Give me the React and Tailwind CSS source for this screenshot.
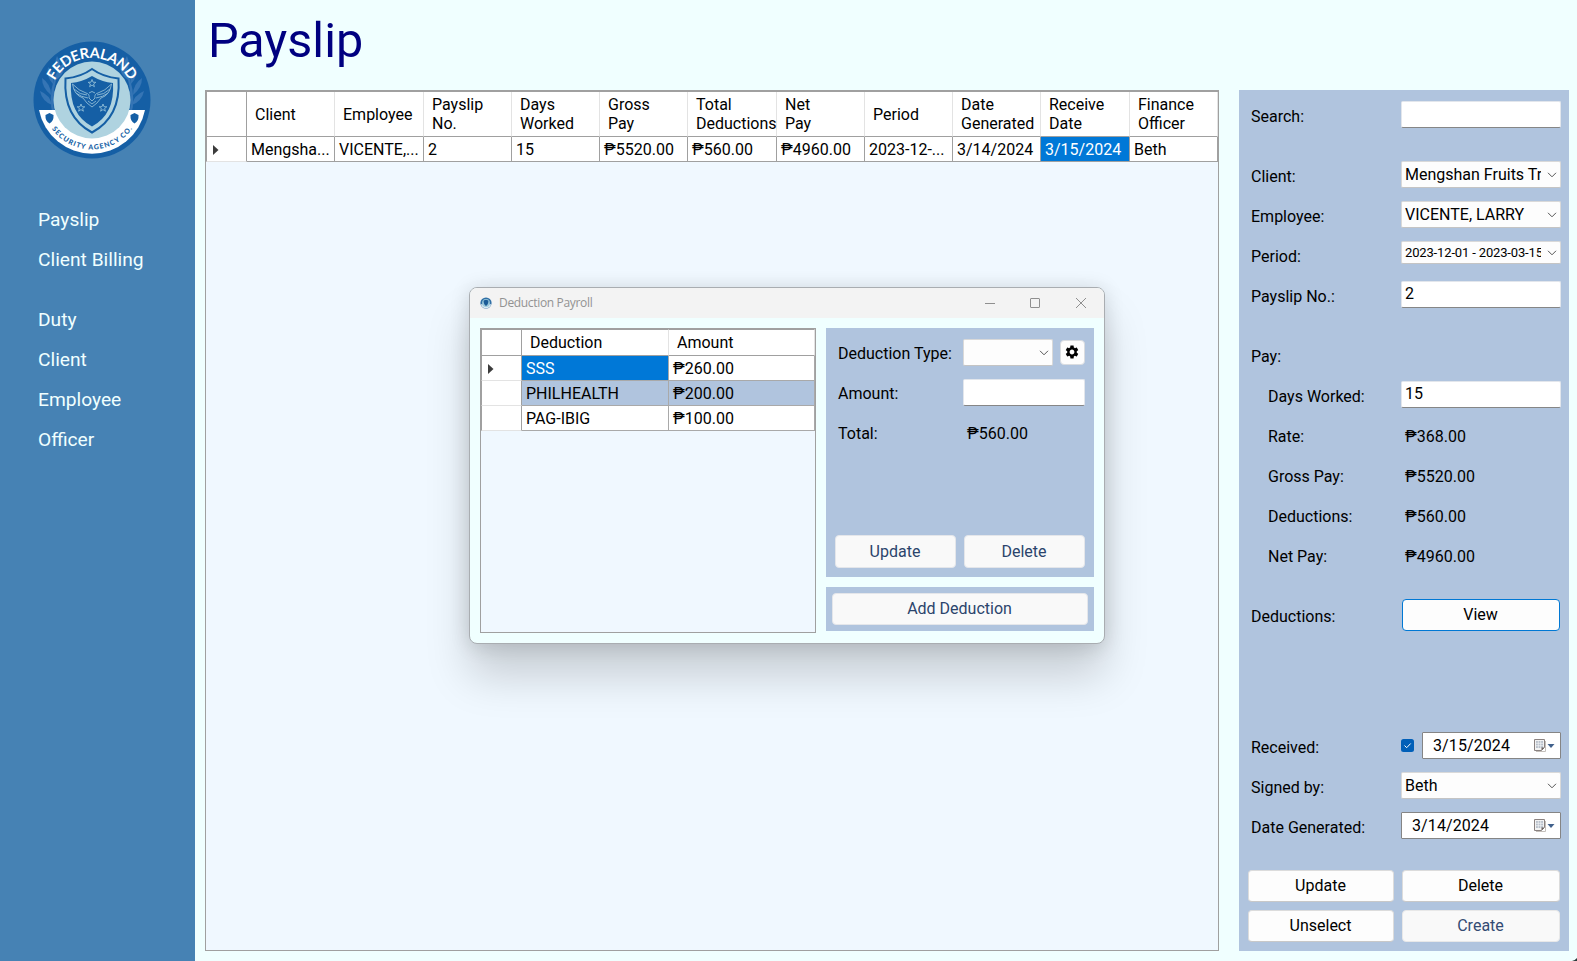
import React from "react";

const MENU = [
  { label: "Payslip", gap: "" },
  { label: "Client Billing", gap: "" },
  { label: "Duty", gap: "mt-5" },
  { label: "Client", gap: "" },
  { label: "Employee", gap: "" },
  { label: "Officer", gap: "" },
];

const COLUMNS = [
  { head: ["Client"], value: "Mengsha..." },
  { head: ["Employee"], value: "VICENTE,..." },
  { head: ["Payslip", "No."], value: "2" },
  { head: ["Days", "Worked"], value: "15" },
  { head: ["Gross", "Pay"], value: "₱5520.00" },
  { head: ["Total", "Deductions"], value: "₱560.00" },
  { head: ["Net", "Pay"], value: "₱4960.00" },
  { head: ["Period"], value: "2023-12-..." },
  { head: ["Date", "Generated"], value: "3/14/2024" },
  { head: ["Receive", "Date"], value: "3/15/2024", selected: true },
  { head: ["Finance", "Officer"], value: "Beth" },
];

const DEDUCTIONS = [
  { name: "SSS", amount: "₱260.00", nameBg: "bg-[#0078d7] text-white", amountBg: "bg-white", current: true },
  { name: "PHILHEALTH", amount: "₱200.00", nameBg: "bg-[#b0c4de]", amountBg: "bg-[#b0c4de]" },
  { name: "PAG-IBIG", amount: "₱100.00", nameBg: "bg-white", amountBg: "bg-white" },
];

const STAR = "M0 -4 L1 -1.3 L3.8 -1.2 L1.6 .5 L2.4 3.2 L0 1.6 L-2.4 3.2 L-1.6 .5 L-3.8 -1.2 L-1 -1.3 Z";

function Leaves() {
  return (
    <g fill="#3575b5">
      <path d="M20 74 Q15 58 21 38 Q26 24 38 14 L39 15 Q28 25 23 39 Q18 58 22 74 Z" />
      <path d="M19 64 Q9 60 7 50 Q17 54 19 64Z" />
      <path d="M18 54 Q9 47 9 37 Q18 43 18 54Z" />
      <path d="M20 43 Q13 36 15 26 Q22 33 20 43Z" />
      <path d="M20 64 Q26 57 23 48 Q17 55 20 64Z" />
      <path d="M25 31 Q20 24 24 15 Q29 23 25 31Z" />
      <path d="M23 39 Q31 34 31 25 Q23 30 23 39Z" />
    </g>
  );
}

function Logo() {
  return (
    <svg width="118" height="118" viewBox="0 0 118 118">
      <defs>
        <path id="arcTop" d="M17 59 A42 42 0 0 1 101 59" />
        <path id="arcBottom" d="M9.500 59 A49.500 49.500 0 0 0 108.500 59" />
      </defs>
      <circle cx="59" cy="59" r="58.500" fill="#155fa5" />
      <Leaves />
      <g transform="translate(118 0) scale(-1 1)">
        <Leaves />
      </g>
      <path d="M6 69 L112 69 A54 54 0 0 1 6 69 Z" fill="#fff" />
      <circle cx="59" cy="59" r="38.500" fill="#afd3e0" />
      <path d="M59 28 Q70 36 85.500 37.500 Q88 76 59 91.500 Q30 76 32.500 37.500 Q48 36 59 28Z" fill="#afd3e0" stroke="#155fa5" strokeWidth="2" />
      <path d="M59 35 Q69 41 80 42 Q82 73 59 85.500 Q36 73 38 42 Q49 41 59 35Z" fill="#155fa5" />
      <g fill="none" stroke="#9cc6dc" strokeWidth=".8">
        <path d={STAR} transform="translate(59 42.500)" />
        <path d={STAR} transform="translate(48 67)" />
        <path d={STAR} transform="translate(70 67)" />
      </g>
      <g fill="none" stroke="#8fbbd6" strokeWidth=".9">
        <path d="M39.500 43 Q41 54 50 57 L54 62 L59 66 L64 62 L68 57 Q77 54 78.500 43 Q72 50 65 52 Q61 53 62 57 L59 60 L56 57 Q57 53 53 52 Q46 50 39.500 43Z" />
        <path d="M41 48 Q47 54 54 54 M43 52 Q48 56 55 57 M77 48 Q71 54 64 54 M75 52 Q70 56 63 57 M56 52 Q59 49 62 52 M55 60 L59 63 L63 60" />
      </g>
      <path d="M16.500 72 L20.500 74 Q21 80 16.500 82.500 Q12 80 12.500 74Z" fill="#155fa5" />
      <path d="M101.500 72 L105.500 74 Q106 80 101.500 82.500 Q97 80 97.500 74Z" fill="#155fa5" />
      <text fill="#fff" fontFamily="Lato, sans-serif" fontWeight="700" fontSize="14.500">
        <textPath href="#arcTop" startOffset="50%" textAnchor="middle" textLength="92" lengthAdjust="spacing">FEDERALAND</textPath>
      </text>
      <text fill="#155fa5" fontFamily="Lato, sans-serif" fontWeight="900" fontSize="7">
        <textPath href="#arcBottom" startOffset="50%" textAnchor="middle" textLength="94" lengthAdjust="spacing">SECURITY AGENCY CO.</textPath>
      </text>
    </svg>
  );
}

function RowArrow() {
  return (
    <svg width="6" height="10" viewBox="0 0 6 10" className="block">
      <path d="M0 0 L5.500 5 L0 10Z" fill="#3c3c3c" />
    </svg>
  );
}

function Chevron() {
  return (
    <svg width="10" height="6" viewBox="0 0 10 6" className="shrink-0">
      <path d="M1 .8 L5 4.800 L9 .8" fill="none" stroke="#555" strokeWidth="1" />
    </svg>
  );
}

function Field({ className = "", children }) {
  return (
    <div className={`h-[27px] rounded-[2px] border border-[#e2e6ec] border-b-[#868686] bg-white pl-[3px] leading-[24px] ${className}`}>
      {children}
    </div>
  );
}

function Combo({ className = "h-[27px] w-[160px]", children }) {
  return (
    <div className={`flex items-center justify-between rounded-[2px] border border-[#d9d9d9] border-b-[#c4c4c4] bg-[#fdfdfd] pl-[3px] pr-[3px] ${className}`}>
      <span className="w-[136px] overflow-hidden whitespace-nowrap">{children}</span>
      <Chevron />
    </div>
  );
}

function DateBox({ className, children }) {
  return (
    <div className={`flex h-[27px] items-center justify-between rounded-[1px] border border-[#858585] bg-white pl-[10px] pr-[5px] ${className}`}>
      <span className="tracking-[0.1px]">{children}</span>
      <span className="flex items-center gap-px">
        <svg width="12" height="13" viewBox="0 0 12 13">
          <path d="M2 12.500 H11.500 V2" fill="none" stroke="#c4bfba" strokeWidth="1" />
          <path d="M.5 .5 H10.500 V8.500 L7.500 11.500 H.5Z" fill="#f3f3f3" stroke="#8a8280" />
          <path d="M2 2 H9 V9 H2Z" fill="#b8c0cb" />
          <path d="M2 4.300 H9 M2 6.700 H9 M4.300 2 V9 M6.700 2 V9" stroke="#f2f4f6" strokeWidth=".7" />
          <path d="M7.500 11.500 V8.500 H10.500Z" fill="#6b6361" />
        </svg>
        <svg width="8" height="4" viewBox="0 0 8 4">
          <path d="M.5 0 H7.500 L4 4Z" fill="#41618c" />
        </svg>
      </span>
    </div>
  );
}

function Button({ className = "", children }) {
  return (
    <div className={`flex items-center justify-center rounded-[4px] border pr-px ${className}`}>
      <span>{children}</span>
    </div>
  );
}

function Row({ label, indent = "pl-3", height = "h-10", children }) {
  return (
    <div className={`flex ${height}`}>
      <div className={`w-[162px] pt-[5px] leading-[22px] ${indent}`}>{label}</div>
      <div>{children}</div>
    </div>
  );
}

function Sidebar() {
  return (
    <aside className="w-[195px] shrink-0 bg-[#4682b4] text-[19.2px] text-[#f0ffff]">
      <div className="pl-[33px] pt-[41px]">
        <Logo />
      </div>
      <nav className="pl-[38px] pt-[41px]">
        {MENU.map((m) => (
          <div key={m.label} className={`flex h-10 items-center ${m.gap}`}>
            {m.label}
          </div>
        ))}
      </nav>
    </aside>
  );
}

function PayslipGrid() {
  return (
    <div className="h-[861px] w-[1014px] border border-[#a0a0a0] bg-[#f0f8ff]">
      <div className="grid h-[71px] grid-cols-[41px_88px_89px_88px_88px_88px_89px_88px_88px_88px_89px_88px] grid-rows-[45px_25px] border-t border-[#a0a0a0]">
        <div className="border-b border-l border-r border-[#a0a0a0] bg-white" />
        {COLUMNS.map((c) => (
          <div key={c.head.join()} className="flex flex-col justify-center whitespace-nowrap border-b border-r border-b-[#a0a0a0] border-r-[#e3e3e3] bg-white pl-2 leading-[19px]">
            {c.head.map((h) => (
              <span key={h}>{h}</span>
            ))}
          </div>
        ))}
        <div className="flex items-center border-b border-l border-r border-b-[#e3e3e3] border-l-[#a0a0a0] border-r-[#a0a0a0] bg-white pl-[6px] pt-[2px]">
          <RowArrow />
        </div>
        {COLUMNS.map((c) => (
          <div key={c.value} className={`whitespace-nowrap border-b border-r border-[#a0a0a0] pl-1 leading-[25px] ${c.selected ? "bg-[#0078d7] text-white" : "bg-white"}`}>
            {c.value}
          </div>
        ))}
      </div>
    </div>
  );
}

function DetailPanel() {
  const plain = "border-[#dcdcdc] border-b-[#c8c8c8] bg-[#fdfdfd]";
  return (
    <section className="flex h-[861px] w-[330px] flex-col bg-[#b0c4de] pt-[11px]">
      <Row label="Search:" height="h-[60px]"><Field className="w-[160px]" /></Row>
      <Row label="Client:"><Combo>Mengshan Fruits Trading</Combo></Row>
      <Row label="Employee:"><Combo>VICENTE, LARRY</Combo></Row>
      <Row label="Period:"><Combo className="h-[23px] w-[160px] text-[13px] tracking-[-0.15px]">2023-12-01 - 2023-03-15</Combo></Row>
      <Row label="Payslip No.:" height="h-[60px]"><Field className="w-[160px]">2</Field></Row>
      <Row label="Pay:" />
      <Row label="Days Worked:" indent="pl-[29px]"><Field className="w-[160px]">15</Field></Row>
      <Row label="Rate:" indent="pl-[29px]"><div className="pl-1 pt-[5px] leading-[22px]">₱368.00</div></Row>
      <Row label="Gross Pay:" indent="pl-[29px]"><div className="pl-1 pt-[5px] leading-[22px]">₱5520.00</div></Row>
      <Row label="Deductions:" indent="pl-[29px]"><div className="pl-1 pt-[5px] leading-[22px]">₱560.00</div></Row>
      <Row label="Net Pay:" indent="pl-[29px]" height="h-[60px]"><div className="pl-1 pt-[5px] leading-[22px]">₱4960.00</div></Row>
      <Row label="Deductions:" height="h-[131px]">
        <Button className="ml-px mt-[-2px] h-8 w-[158px] border-[#0078d4] bg-[#fdfdfd]">View</Button>
      </Row>
      <Row label="Received:">
        <div className="flex w-[160px] items-center justify-between">
          <svg width="13" height="13" viewBox="0 0 13 13">
            <rect width="13" height="13" rx="2.500" fill="#005fb8" />
            <path d="M3.500 6.500 L5.700 8.700 L9.700 4.500" fill="none" stroke="#fff" strokeWidth="1" />
          </svg>
          <DateBox className="w-[139px]">3/15/2024</DateBox>
        </div>
      </Row>
      <Row label="Signed by:"><Combo>Beth</Combo></Row>
      <Row label="Date Generated:" height="h-[58px]"><DateBox className="w-[160px]">3/14/2024</DateBox></Row>
      <div className="ml-[9px] grid grid-cols-[146px_158px] gap-2">
        <Button className={`h-8 ${plain}`}>Update</Button>
        <Button className={`h-8 ${plain}`}>Delete</Button>
        <Button className={`h-8 ${plain}`}>Unselect</Button>
        <Button className="h-8 border-[#e8e8e8] bg-[#f9f9f9] text-[#334b73]">Create</Button>
      </div>
    </section>
  );
}

function DeductionDialog() {
  const soft = "border-[#e4e6ea] bg-[#f9f9f9] text-[#2b446c]";
  return (
    <div className="absolute left-[469px] top-[287px] flex h-[357px] w-[636px] flex-col overflow-visible rounded-[8px] border border-[#a9adb1] bg-[#f0ffff] shadow-[0_32px_44px_0_rgba(0,0,0,0.17),0_2px_20px_rgba(0,0,0,0.14)]">
      <div className="flex h-[30px] items-center rounded-t-[7px] bg-[#f3f3f3] pl-[10px] pr-[17px]">
        <svg width="12" height="12" viewBox="0 0 12 12">
          <circle cx="6" cy="6" r="5.600" fill="#2f6fa6" />
          <path d="M.8 7.200 H11.200 A5.400 5.400 0 0 1 .8 7.200Z" fill="#dceaf2" />
          <circle cx="6" cy="6" r="3.900" fill="#9cc8da" />
          <path d="M3.600 3.600 L6 2.800 L8.400 3.600 Q8.600 7.600 6 9 Q3.400 7.600 3.600 3.600Z" fill="#1c5c97" />
        </svg>
        <span className="flex-1 pl-[7px] font-['Open_Sans',sans-serif] text-[12px] tracking-[-0.33px] text-[#929292]">Deduction Payroll</span>
        <svg width="102" height="12" viewBox="0 0 102 12" fill="none" stroke="#8f8f8f">
          <path d="M0 6.500 H10" />
          <rect x="45.500" y="1.500" width="9" height="9" rx=".5" />
          <path d="M91 1 L101 11 M101 1 L91 11" />
        </svg>
      </div>
      <div className="flex gap-[10px] pl-[10px] pt-[10px]">
        <div className="h-[305px] w-[336px] border border-[#a0a0a0] bg-[#f0f8ff]">
          <div className="grid grid-cols-[41px_147px_146px] grid-rows-[27px_25px_25px_25px]">
            <div className="border border-[#a0a0a0] bg-white" />
            <div className="border-b border-r border-t border-[#a0a0a0] border-r-[#e3e3e3] bg-white pl-2 leading-[25px]">Deduction</div>
            <div className="border-b border-r border-t border-[#a0a0a0] border-r-[#e3e3e3] bg-white pl-2 leading-[25px]">Amount</div>
            {DEDUCTIONS.map((d) => (
              <React.Fragment key={d.name}>
                <div className="flex items-center border-b border-l border-r border-b-[#e3e3e3] border-l-[#a0a0a0] border-r-[#a0a0a0] bg-white pl-[6px] pt-[2px]">
                  {d.current && <RowArrow />}
                </div>
                <div className={`border-b border-r border-[#a9a9a9] pl-1 leading-[25px] ${d.nameBg}`}>{d.name}</div>
                <div className={`border-b border-r border-[#a9a9a9] pl-1 leading-[25px] ${d.amountBg}`}>{d.amount}</div>
              </React.Fragment>
            ))}
          </div>
        </div>
        <div className="flex w-[268px] flex-col gap-[10px]">
          <div className="flex h-[249px] flex-col bg-[#b0c4de] pt-[11px]">
            <div className="flex h-10">
              <div className="w-[137px] pl-3 pt-1 leading-[22px]">Deduction Type:</div>
              <div className="flex h-[27px] w-[90px] items-center justify-end rounded-[2px] border border-[#d9d9d9] border-b-[#c4c4c4] bg-[#fdfdfd] pr-[3px]">
                <Chevron />
              </div>
              <div className="ml-[7px] mt-px flex h-[25px] w-[25px] items-center justify-center rounded-[4px] border border-[#d9dce0] bg-[#fdfdfd] pb-px pr-px">
                <svg width="16" height="16" viewBox="0 0 24 24">
                  <path fill="#000" d="M19.140 12.940c.040-.3.060-.610.060-.940 0-.320-.020-.640-.070-.940l2.030-1.580c.180-.140.230-.410.120-.610l-1.920-3.320c-.120-.220-.370-.290-.590-.220l-2.390.960c-.5-.380-1.030-.7-1.620-.940l-.360-2.540c-.040-.240-.240-.410-.480-.410h-3.840c-.240 0-.430.170-.470.410l-.360 2.540c-.590.240-1.130.570-1.620.940l-2.390-.960c-.220-.080-.470 0-.590.220L2.740 8.870c-.120.210-.080.470.120.610l2.030 1.580c-.050.3-.090.630-.090.940s.020.640.070.940l-2.030 1.580c-.180.140-.230.410-.120.610l1.920 3.320c.120.220.370.290.590.220l2.390-.960c.5.380 1.030.7 1.620.940l.360 2.540c.050.240.240.410.480.410h3.840c.240 0 .440-.170.470-.410l.360-2.540c.590-.240 1.130-.560 1.620-.940l2.390.960c.220.080.470 0 .590-.220l1.920-3.320c.120-.220.070-.470-.120-.610l-2.010-1.580zM12 15.600c-1.980 0-3.600-1.620-3.600-3.600s1.620-3.600 3.600-3.600 3.600 1.620 3.600 3.600-1.620 3.600-3.600 3.600z" />
                </svg>
              </div>
            </div>
            <div className="flex h-10">
              <div className="w-[137px] pl-3 pt-1 leading-[22px]">Amount:</div>
              <Field className="w-[122px]" />
            </div>
            <div className="flex flex-1">
              <div className="w-[141px] pl-3 pt-1 leading-[22px]">Total:</div>
              <div className="pt-1 leading-[22px]">₱560.00</div>
            </div>
            <div className="mb-[9px] ml-[9px] grid grid-cols-[121px_121px] gap-2">
              <Button className={`h-[33px] ${soft}`}>Update</Button>
              <Button className={`h-[33px] ${soft}`}>Delete</Button>
            </div>
          </div>
          <div className="h-[44px] bg-[#b0c4de] px-[6px] pt-[6px]">
            <Button className={`h-[32px] ${soft}`}>Add Deduction</Button>
          </div>
        </div>
      </div>
    </div>
  );
}

export default function App() {
  return (
    <div className="relative flex h-[961px] w-[1577px] overflow-hidden bg-[#f0ffff] font-['Roboto',sans-serif] text-[16px] text-black">
      <Sidebar />
      <main className="pl-[10px]">
        <h1 className="h-[90px] pl-[3px] pt-[12px] text-[48.5px] leading-[57px] text-[#000080]">Payslip</h1>
        <div className="flex gap-5">
          <PayslipGrid />
          <DetailPanel />
        </div>
      </main>
      <DeductionDialog />
      <svg width="5" height="3" viewBox="0 0 5 3" className="absolute bottom-0 right-0">
        <path d="M5 0 L5 3 L0 3 Q3 2.500 5 0Z" fill="#2b3a3a" />
      </svg>
    </div>
  );
}
